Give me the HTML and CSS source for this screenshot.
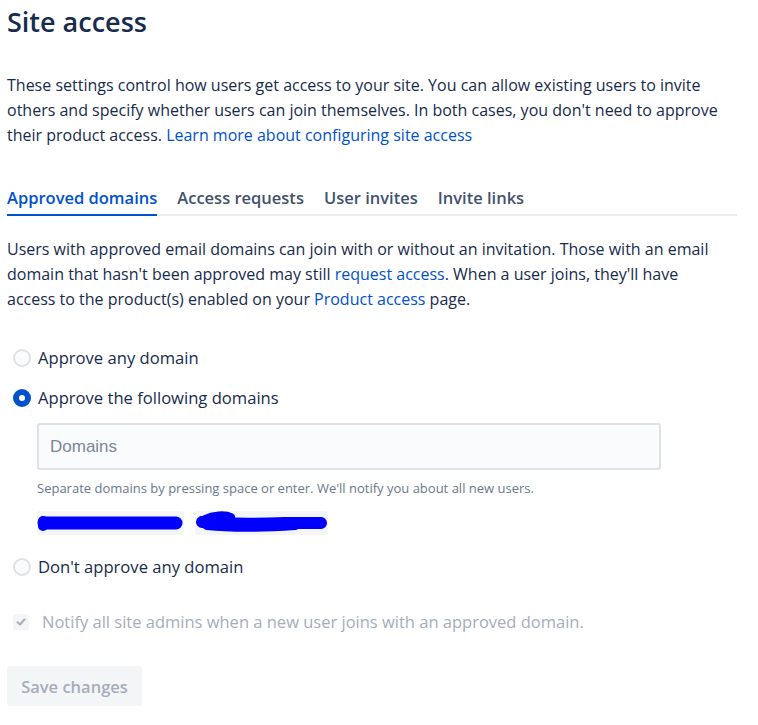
FILE: index.html
```html
<!DOCTYPE html>
<html>
<head>
<meta charset="utf-8">
<link rel="stylesheet" href="styles.css">
</head>
<body>
<main class="page">
  <h1 class="title">Site access</h1>
  <p class="intro">These settings control how users get access to your site. You can allow existing users to invite others and specify whether users can join themselves. In both cases, you don't need to approve their product access. <a class="link" href="#">Learn more about configuring site access</a></p>

  <nav class="tabs">
    <span class="tab tab-active">Approved domains</span>
    <span class="tab">Access requests</span>
    <span class="tab">User invites</span>
    <span class="tab">Invite links</span>
  </nav>

  <p class="desc">Users with approved email domains can join with or without an invitation. Those with an email domain that hasn't been approved may still <a class="link" href="#">request access</a>. When a user joins, they'll have access to the product(s) enabled on your <a class="link" href="#">Product access</a> page.</p>

  <div class="options">
    <label class="radio-row"><span class="radio"></span>Approve any domain</label>
    <label class="radio-row row-checked"><span class="radio radio-on"></span>Approve the following domains</label>
    <div class="domains">
      <div class="input">Domains</div>
      <div class="helper">Separate domains by pressing space or enter. We'll notify you about all new users.</div>
      <div class="chips">
        <span class="chip chip-a">
          <svg width="147" height="24" viewBox="0 0 147 24"><path d="M7 12 L139 12" stroke="#0000ff" stroke-width="13" stroke-linecap="round" fill="none"/><path d="M6 10 L6 15" stroke="#0000ff" stroke-width="10" stroke-linecap="round"/></svg>
        </span>
        <span class="chip chip-b">
          <svg width="133" height="24" viewBox="0 0 133 24"><path d="M7 11 C 30 13, 60 13, 90 12 C 105 12, 118 12, 126 12" stroke="#0000ff" stroke-width="12" stroke-linecap="round" fill="none"/><path d="M10 8 C 18 4, 30 3, 36 6" stroke="#0000ff" stroke-width="8" stroke-linecap="round" fill="none"/><path d="M12 15 C 40 18, 70 17, 100 15" stroke="#0000ff" stroke-width="8" stroke-linecap="round" fill="none"/></svg>
        </span>
      </div>
    </div>
    <label class="radio-row row-last"><span class="radio"></span>Don't approve any domain</label>
  </div>

  <label class="check-row"><span class="checkbox"><svg width="12" height="12" viewBox="0 0 12 12"><path d="M2.5 6.2 L5 8.5 L9.5 3.5" stroke="#a5adba" stroke-width="2" fill="none" stroke-linecap="round" stroke-linejoin="round"/></svg></span>Notify all site admins when a new user joins with an approved domain.</label>

  <button class="save" type="button">Save changes</button>
</main>
</body>
</html>
```

FILE: styles.css
```css
html, body {
  margin: 0;
  padding: 0;
  background: #ffffff;
}
body {
  font-family: "Open Sans", "Noto Sans", "Liberation Sans", sans-serif;
  color: #172b4d;
  font-size: 16px;
}
.page {
  padding: 6px 7px 0 7px;
  display: flex;
  flex-direction: column;
  align-items: flex-start;
}
.title {
  margin: 0;
  font-size: 27px;
  line-height: 32px;
  font-weight: 600;
  color: #172b4d;
}
.intro {
  margin: 35px 0 0 0;
  line-height: 25px;
  width: 745px;
}
.link {
  color: #0052cc;
  text-decoration: none;
}
.tabs {
  margin-top: 38px;
  display: flex;
  gap: 20px;
  width: 730px;
  border-bottom: 2px solid #ebecf0;
}
.tab {
  font-weight: 600;
  font-size: 16.5px;
  line-height: 24px;
  padding-bottom: 4px;
  color: #42526e;
  margin-bottom: -2px;
  border-bottom: 2px solid transparent;
}
.tab-active {
  color: #0052cc;
  border-bottom-color: #0052cc;
}
.desc {
  margin: 21px 0 0 0;
  line-height: 25px;
  width: 715px;
}
.options {
  margin-top: 34px;
  display: flex;
  flex-direction: column;
}
.radio-row {
  display: flex;
  align-items: center;
  gap: 7px;
  line-height: 24px;
  font-size: 16.6px;
  padding-left: 6px;
}
.row-checked {
  margin-top: 16px;
}
.row-last {
  margin-top: 20px;
}
.radio {
  width: 14px;
  height: 14px;
  border-radius: 50%;
  border: 2px solid #dfe1e6;
  background: #fafbfc;
  box-sizing: content-box;
}
.radio-on {
  border-color: #0052cc;
  background: #0052cc;
  position: relative;
}
.radio-on::after {
  content: "";
  position: absolute;
  left: 4px;
  top: 4px;
  width: 6px;
  height: 6px;
  border-radius: 50%;
  background: #ffffff;
}
.domains {
  margin-left: 30px;
  margin-top: 13px;
  display: flex;
  flex-direction: column;
}
.input {
  width: 609px;
  height: 43px;
  border: 2px solid #dfe1e6;
  border-radius: 3px;
  background: #fafbfc;
  font-family: "Liberation Sans", Arial, sans-serif;
  font-size: 17px;
  color: #7a869a;
  padding-left: 11px;
  display: flex;
  align-items: center;
}
.helper {
  margin-top: 10px;
  font-size: 13px;
  line-height: 16px;
  color: #6b778c;
}
.chips {
  margin-top: 15px;
  display: flex;
  gap: 11px;
}
.chip {
  display: flex;
  background: #f4f5f7;
  border-radius: 3px;
  height: 24px;
}
.check-row {
  margin-top: 31px;
  display: flex;
  align-items: center;
  gap: 13px;
  padding-left: 6px;
  font-size: 16.5px;
  line-height: 24px;
  color: #a5adba;
}
.checkbox {
  width: 16px;
  height: 16px;
  border-radius: 3px;
  background: #f4f5f7;
  display: flex;
  align-items: center;
  justify-content: center;
}
.save {
  margin-top: 32px;
  width: 135px;
  height: 40px;
  border: none;
  border-radius: 3px;
  background: #f4f5f7;
  color: #a5adba;
  font-family: inherit;
  font-size: 16.5px;
  font-weight: 600;
  padding: 0;
}
```
